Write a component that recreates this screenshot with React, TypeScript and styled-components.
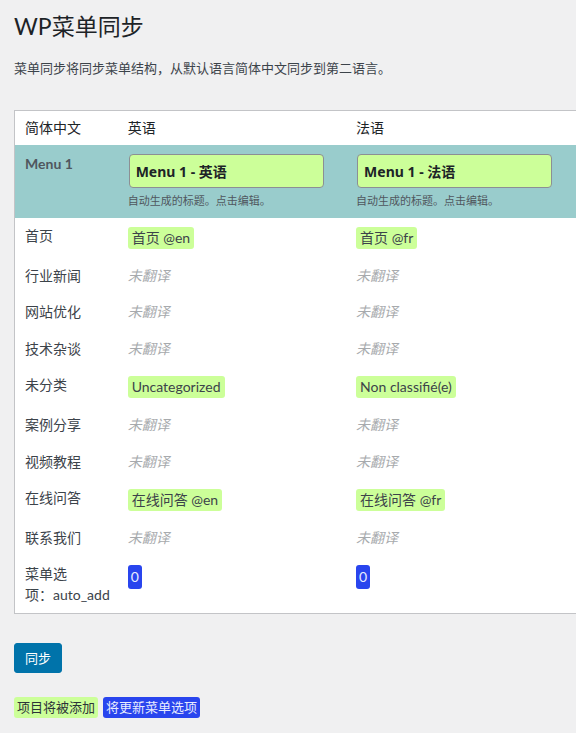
import React from 'react';
import styled, { createGlobalStyle } from 'styled-components';

const GlobalStyle = createGlobalStyle`
  html, body {
    margin: 0;
    padding: 0;
    overflow-x: hidden;
    background: #f0f0f1;
  }
  body {
    font-family: Lato, "Noto Sans CJK SC", sans-serif;
    color: #3c434a;
  }
`;

const Page = styled.div`
  padding: 0 0 14px 14px;
`;

const Title = styled.h1`
  margin: 11px 0 0;
  font-size: 23px;
  font-weight: 400;
  line-height: 30px;
  color: #1d2327;
`;

const Intro = styled.p`
  margin: 17px 0 32px;
  font-size: 13px;
  line-height: 20px;
  color: #3c434a;
`;

const SyncTable = styled.table`
  width: 563px;
  table-layout: fixed;
  border-collapse: collapse;
  border: 1px solid #c3c4c7;
  background: #fff;
`;

const HeadCell = styled.th`
  padding: 8px 10px;
  font-size: 14px;
  font-weight: 400;
  line-height: 18px;
  text-align: left;
  color: #1d2327;
`;

const Row = styled.tr<{ $menu?: boolean }>`
  background: ${({ $menu }) => ($menu ? '#99cccc' : '#fff')};
`;

const Cell = styled.td<{ $menu?: boolean }>`
  padding: ${({ $menu }) => ($menu ? '9px 10px' : '8px 10px')};
  vertical-align: top;
  font-size: 14px;
  line-height: 20.4px;
  color: #3c434a;
`;

const MenuName = styled.span`
  font-size: 14px;
  font-weight: 700;
  color: #50575e;
`;

const TitleInput = styled.input`
  box-sizing: border-box;
  display: block;
  width: 195px;
  height: 34px;
  margin: 0 0 0 1px;
  padding: 0 6px;
  border: 1px solid #8c8f94;
  border-radius: 4px;
  background: #ccff99;
  font-family: "Noto Sans", "Noto Sans CJK SC", sans-serif;
  font-size: 14px;
  font-weight: 700;
  color: #1d2327;
  outline: none;
`;

const Hint = styled.div`
  margin-top: 5px;
  font-size: 11px;
  line-height: 16px;
  color: #50575e;
`;

const Tag = styled.span<{ $kind?: 'item' | 'option' }>`
  display: inline-block;
  vertical-align: top;
  margin: 1px 0;
  padding: ${({ $kind }) => ($kind === 'option' ? '2px 3px' : '1px 4px')};
  border-radius: 3px;
  line-height: 20px;
  background: ${({ $kind }) => ($kind === 'option' ? '#2945ee' : '#ccff99')};
  color: ${({ $kind }) => ($kind === 'option' ? '#e8ecff' : '#3c434a')};
`;

const Untranslated = styled.span`
  font-style: italic;
  color: #a7aaad;
`;

const NoWrap = styled.span`
  white-space: nowrap;
`;

const SyncButton = styled.button`
  display: block;
  margin-top: 29px;
  height: 30px;
  padding: 0 10px;
  border: 1px solid #0073aa;
  border-radius: 3px;
  background: #0073aa;
  color: #fff;
  font-family: Lato, "Noto Sans CJK SC", sans-serif;
  font-size: 13px;
  line-height: 28px;
  cursor: pointer;
`;

const Legend = styled.div`
  display: flex;
  gap: 5px;
  margin-top: 24px;
`;

const LegendTag = styled.span<{ $kind: 'item' | 'option' }>`
  padding: 1px 3px;
  border-radius: 3px;
  font-size: 13px;
  line-height: 19px;
  background: ${({ $kind }) => ($kind === 'option' ? '#2945ee' : '#ccff99')};
  color: ${({ $kind }) => ($kind === 'option' ? '#e8ecff' : '#2c3338')};
`;

type Translation = string | null;

const items: { name: string; en: Translation; fr: Translation }[] = [
  { name: '首页', en: '首页 @en', fr: '首页 @fr' },
  { name: '行业新闻', en: null, fr: null },
  { name: '网站优化', en: null, fr: null },
  { name: '技术杂谈', en: null, fr: null },
  { name: '未分类', en: 'Uncategorized', fr: 'Non classifié(e)' },
  { name: '案例分享', en: null, fr: null },
  { name: '视频教程', en: null, fr: null },
  { name: '在线问答', en: '在线问答 @en', fr: '在线问答 @fr' },
  { name: '联系我们', en: null, fr: null },
];

const TranslationCell = ({ value }: { value: Translation }) => (
  <Cell>{value ? <Tag>{value}</Tag> : <Untranslated>未翻译</Untranslated>}</Cell>
);

const App = () => (
  <Page>
    <GlobalStyle />
    <Title>WP菜单同步</Title>
    <Intro>菜单同步将同步菜单结构，从默认语言简体中文同步到第二语言。</Intro>

    <SyncTable>
      <colgroup>
        <col style={{ width: 103 }} />
        <col style={{ width: 228 }} />
        <col style={{ width: 230 }} />
      </colgroup>
      <thead>
        <tr>
          <HeadCell>简体中文</HeadCell>
          <HeadCell>英语</HeadCell>
          <HeadCell>法语</HeadCell>
        </tr>
      </thead>
      <tbody>
        <Row $menu>
          <Cell $menu>
            <MenuName>Menu 1</MenuName>
          </Cell>
          <Cell $menu>
            <TitleInput defaultValue="Menu 1 - 英语" />
            <Hint>自动生成的标题。点击编辑。</Hint>
          </Cell>
          <Cell $menu>
            <TitleInput defaultValue="Menu 1 - 法语" />
            <Hint>自动生成的标题。点击编辑。</Hint>
          </Cell>
        </Row>
        {items.map((item, i) => (
          <Row key={i}>
            <Cell>{item.name}</Cell>
            <TranslationCell value={item.en} />
            <TranslationCell value={item.fr} />
          </Row>
        ))}
        <Row>
          <Cell>
            菜单选<NoWrap>项：auto_add</NoWrap>
          </Cell>
          <Cell>
            <Tag $kind="option">0</Tag>
          </Cell>
          <Cell>
            <Tag $kind="option">0</Tag>
          </Cell>
        </Row>
      </tbody>
    </SyncTable>

    <SyncButton>同步</SyncButton>

    <Legend>
      <LegendTag $kind="item">项目将被添加</LegendTag>
      <LegendTag $kind="option">将更新菜单选项</LegendTag>
    </Legend>
  </Page>
);

export default App;
